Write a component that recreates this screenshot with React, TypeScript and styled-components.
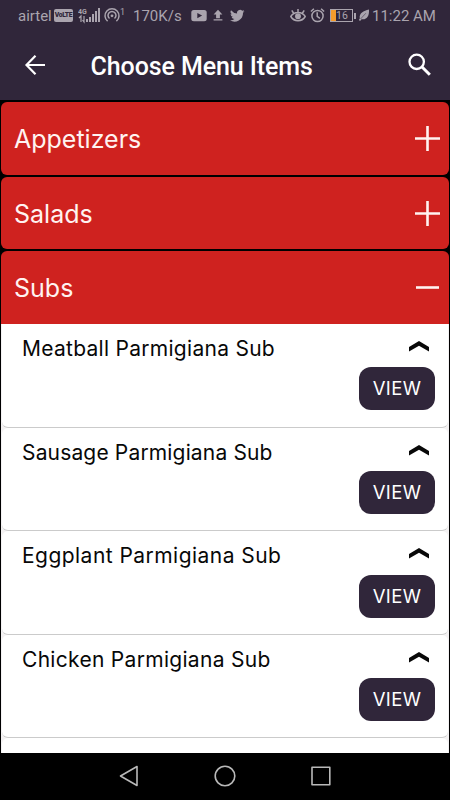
import React from "react";
import styled, { createGlobalStyle } from "styled-components";

const plum = "#30263a";
const red = "#cf221f";
const statusGrey = "#aaa4ae";

const GlobalStyle = createGlobalStyle`
  * { box-sizing: border-box; }
  body { margin: 0; background: #000; }
`;

const Phone = styled.main`
  width: 450px;
  height: 800px;
  display: flex;
  flex-direction: column;
  overflow: hidden;
  background: #000;
  font-family: Inter, "Open Sans", sans-serif;
`;

const StatusBar = styled.div`
  height: 31px;
  flex: none;
  display: flex;
  align-items: center;
  padding-left: 18px;
  background: ${plum};
  color: ${statusGrey};
  font: 400 15px/32px Roboto, sans-serif;
  white-space: nowrap;
`;

const Slot = styled.span<{ $w: number; $gap?: number }>`
  flex: none;
  width: ${(p) => p.$w}px;
  margin-left: ${(p) => p.$gap ?? 0}px;
  height: 31px;
  svg { display: block; }
`;

const VolteBadge = styled.span`
  flex: none;
  width: 19px;
  height: 13px;
  margin-left: 3px;
  border-radius: 2px;
  background: ${statusGrey};
  color: ${plum};
  font: 900 6.8px/13px Roboto, sans-serif;
  letter-spacing: -0.35px;
  text-align: center;
`;

const Superscript = styled.span`
  flex: none;
  width: 5px;
  font: 400 9px/9px Roboto, sans-serif;
  margin-top: -6px;
`;

const Battery = styled.span`
  flex: none;
  width: 23px;
  height: 13px;
  margin-left: 5px;
  border: 1px solid ${statusGrey};
  background: linear-gradient(90deg, #f49b2c 0 5px, transparent 5px);
  font: 400 10.5px/11px Roboto, sans-serif;
  padding-left: 5px;
  letter-spacing: 0.2px;
`;

const BatteryTip = styled.span`
  flex: none;
  width: 2px;
  height: 6px;
  margin-left: 1px;
  background: ${statusGrey};
`;

const AppBar = styled.header`
  height: 69px;
  flex: none;
  display: flex;
  align-items: center;
  background: ${plum};
  padding: 0 17px 0 22px;
  svg { flex: none; display: block; margin-top: -1px; }
`;

const Title = styled.h1`
  flex: 1;
  margin: 0 0 0 40.5px;
  padding-top: 2px;
  color: #fff;
  font: 500 25px/67px Roboto, sans-serif;
  letter-spacing: -0.09px;
  white-space: nowrap;
`;

const Menu = styled.section`
  flex: 1;
  min-height: 0;
  overflow: hidden;
  display: flex;
  flex-direction: column;
  gap: 2px;
  padding: 2px 1.5px 0 1px;
`;

const Category = styled.div<{ $open?: boolean }>`
  height: 72.7px;
  flex: none;
  display: flex;
  align-items: center;
  justify-content: space-between;
  padding: 0 8px 0 13px;
  border-radius: ${(p) => (p.$open ? "6px 6px 0 0" : "6px")};
  background: ${red};
  svg { display: block; flex: none; }
`;

const CategoryName = styled.span`
  color: #fff3f1;
  font-size: 25px;
  line-height: 30px;
  padding-top: 1px;
`;

const Group = styled.div`
  flex: none;
  display: flex;
  flex-direction: column;
`;

const Items = styled.div`
  background: #f4f2f3;
  display: flex;
  flex-direction: column;
`;

const Item = styled.article`
  height: 103.4px;
  flex: none;
  display: flex;
  justify-content: space-between;
  margin: 0 1px 0 1px;
  padding: 0 12.5px 0 20px;
  background: #fff;
  border-bottom: 1px solid #cbcbcb;
  border-radius: 6px;
  &:first-child { height: 103.9px; border-radius: 0 0 6px 6px; }
`;

const ItemName = styled.span<{ $spacing: number }>`
  color: #080808;
  font-size: 21px;
  line-height: 26px;
  margin-top: 12px;
  letter-spacing: ${(p) => p.$spacing}px;
  white-space: nowrap;
`;

const Actions = styled.div`
  display: flex;
  flex-direction: column;
  align-items: flex-end;
  padding-top: 17px;
  svg { display: block; margin-right: 6px; }
`;

const ViewButton = styled.button`
  width: 76px;
  height: 43px;
  margin-top: 15.3px;
  padding: 0;
  border: 0;
  border-radius: 12px;
  background: ${plum};
  color: #fff;
  font: 400 18.5px/43px Inter, sans-serif;
  letter-spacing: 0.35px;
`;

const NavBar = styled.nav`
  height: 47.5px;
  flex: none;
  display: flex;
  justify-content: center;
  align-items: center;
  gap: 74px;
  background: #000;
  svg { display: block; }
`;

const BackArrow = () => (
  <svg width="28" height="28" viewBox="0 0 28 28" fill="none" stroke="#fff" strokeWidth="2.2">
    <path d="M23 14H4.8M13.5 4.8 4.5 14l9 9.2" />
  </svg>
);

const SearchIcon = () => (
  <svg width="28" height="28" viewBox="0 0 28 28" fill="none" stroke="#fff">
    <circle cx="11.7" cy="10.8" r="7.2" strokeWidth="2.3" />
    <path d="m16.8 15.8 8 8" strokeWidth="3" />
  </svg>
);

const Toggle = ({ open }: { open?: boolean }) => (
  <svg width="27" height="27" viewBox="0 0 27 27" stroke="#fff3f1" strokeWidth="2.6">
    <path d={open ? "M2 13.5H25" : "M1 13.5H26M13.5 1V26"} />
  </svg>
);

const Chevron = () => (
  <svg width="20" height="11" viewBox="0 0 20 11" fill="#080808">
    <path d="M0 6 10 0l10 6v4.6L10 4.7 0 10.6Z" />
  </svg>
);

const SignalIcon = () => (
  <svg width="23" height="31" viewBox="0 0 23 31" fill={statusGrey}>
    <text x="0" y="14" fontFamily="Roboto" fontSize="7" fontWeight="700">4G</text>
    <path d="M8 19h2v3H8zM11 17h2v5h-2zM14 14h2v8h-2zM17 11h2v11h-2zM20 8h2v14h-2z" />
    <path d="M1 18 3 16v6M6 16v6L4.5 20" fill="none" stroke={statusGrey} strokeWidth="1.2" />
  </svg>
);

const HotspotIcon = () => (
  <svg width="16" height="31" viewBox="0 0 16 31" fill="none" stroke={statusGrey} strokeWidth="1.5">
    <path d="M3.6 21.2A7 7 0 1 1 12.4 21.2M5.5 18.5A4 4 0 1 1 10.5 18.5" />
    <circle cx="8" cy="15.8" r="1.4" fill={statusGrey} stroke="none" />
  </svg>
);

const YoutubeIcon = () => (
  <svg width="16" height="31" viewBox="0 0 16 31">
    <rect x=".3" y="10" width="15.4" height="11.2" rx="2.5" fill={statusGrey} />
    <path d="m6.3 13 4.8 2.6-4.8 2.6Z" fill={plum} />
  </svg>
);

const UploadIcon = () => (
  <svg width="10" height="31" viewBox="0 0 10 31" fill={statusGrey}>
    <path d="m5 9.8 4.4 4.7H6.9v3.8H3.1v-3.8H.6ZM.6 19.2h8.8v1.4H.6z" />
  </svg>
);

const TwitterIcon = () => (
  <svg width="14.5" height="31" viewBox="0 0 24 51.3" fill={statusGrey}>
    <path
      transform="translate(0 14)"
      d="M24 4.6a10 10 0 0 1-2.8.8 5 5 0 0 0 2.1-2.7 10 10 0 0 1-3.1 1.2 4.9 4.9 0 0 0-8.4 4.5A14 14 0 0 1 1.7 3.1a4.9 4.9 0 0 0 1.5 6.6A5 5 0 0 1 1 9.1a4.9 4.9 0 0 0 3.9 4.9 5 5 0 0 1-2.2.1 4.9 4.9 0 0 0 4.6 3.4A9.9 9.9 0 0 1 0 19.5 14 14 0 0 0 21.5 7.1 10 10 0 0 0 24 4.6Z"
    />
  </svg>
);

const EyeIcon = () => (
  <svg width="16" height="31" viewBox="0 0 16 31" fill="none" stroke={statusGrey} strokeWidth="1.5">
    <path d="M.8 16.5C4 11 12 11 15.2 16.5 12 22 4 22 .8 16.5ZM8 12V9M3.5 13 1.8 10.3M12.5 13l1.7-2.7" />
    <circle cx="8" cy="16.3" r="2.2" fill={statusGrey} />
  </svg>
);

const AlarmIcon = () => (
  <svg width="15" height="31" viewBox="0 0 15 31" fill="none" stroke={statusGrey} strokeWidth="1.5">
    <circle cx="7.5" cy="16" r="5.6" />
    <path d="M7.2 12.3v4l2.7 2M.9 11.5l3-2.7M14.1 11.5l-3-2.7" />
  </svg>
);

const LeafIcon = () => (
  <svg width="12" height="31" viewBox="0 0 12 31">
    <path d="M11 9.5c.4 6.5-2 10.6-7.5 9.7L2.1 21 .8 20.1l1-1.7C1 13 5.5 11 11 9.5Z" fill={statusGrey} />
    <path d="m2.5 19 5.4-5.8" stroke={plum} strokeWidth=".5" />
  </svg>
);

const navStroke = { fill: "none", stroke: "#b9b9b9", strokeWidth: 1.6, strokeLinejoin: "round" as const };

const items = [
  { name: "Meatball Parmigiana Sub", spacing: 0.28 },
  { name: "Sausage Parmigiana Sub", spacing: 0.16 },
  { name: "Eggplant Parmigiana Sub", spacing: 0.46 },
  { name: "Chicken Parmigiana Sub", spacing: 0.3 },
];

export default function App() {
  return (
    <>
      <GlobalStyle />
      <Phone>
        <StatusBar>
          <Slot $w={33}>airtel</Slot>
          <VolteBadge>VoLTE</VolteBadge>
          <Slot $w={23} $gap={5}><SignalIcon /></Slot>
          <Slot $w={16} $gap={3}><HotspotIcon /></Slot>
          <Superscript>1</Superscript>
          <Slot $w={50} $gap={8}>170K/s</Slot>
          <Slot $w={16} $gap={8}><YoutubeIcon /></Slot>
          <Slot $w={10} $gap={6}><UploadIcon /></Slot>
          <Slot $w={15} $gap={7}><TwitterIcon /></Slot>
          <Slot $w={16} $gap={45}><EyeIcon /></Slot>
          <Slot $w={15} $gap={4}><AlarmIcon /></Slot>
          <Battery>16</Battery>
          <BatteryTip />
          <Slot $w={12} $gap={2}><LeafIcon /></Slot>
          <Slot $w={64} $gap={2}>11:22 AM</Slot>
        </StatusBar>
        <AppBar>
          <BackArrow />
          <Title>Choose Menu Items</Title>
          <SearchIcon />
        </AppBar>
        <Menu>
          <Category>
            <CategoryName>Appetizers</CategoryName>
            <Toggle />
          </Category>
          <Category>
            <CategoryName>Salads</CategoryName>
            <Toggle />
          </Category>
          <Group>
            <Category $open>
              <CategoryName>Subs</CategoryName>
              <Toggle open />
            </Category>
            <Items>
              {items.map((item) => (
                <Item key={item.name}>
                  <ItemName $spacing={item.spacing}>{item.name}</ItemName>
                  <Actions>
                    <Chevron />
                    <ViewButton>VIEW</ViewButton>
                  </Actions>
                </Item>
              ))}
              <Item />
            </Items>
          </Group>
        </Menu>
        <NavBar>
          <svg width="22" height="24" viewBox="0 0 22 24" {...navStroke}>
            <path d="M19 2.5v19L2.5 12Z" />
          </svg>
          <svg width="22" height="24" viewBox="0 0 22 24" {...navStroke}>
            <circle cx="11" cy="12" r="9.8" />
          </svg>
          <svg width="22" height="24" viewBox="0 0 22 24" {...navStroke}>
            <rect x="2" y="3.2" width="17.8" height="17.6" />
          </svg>
        </NavBar>
      </Phone>
    </>
  );
}
